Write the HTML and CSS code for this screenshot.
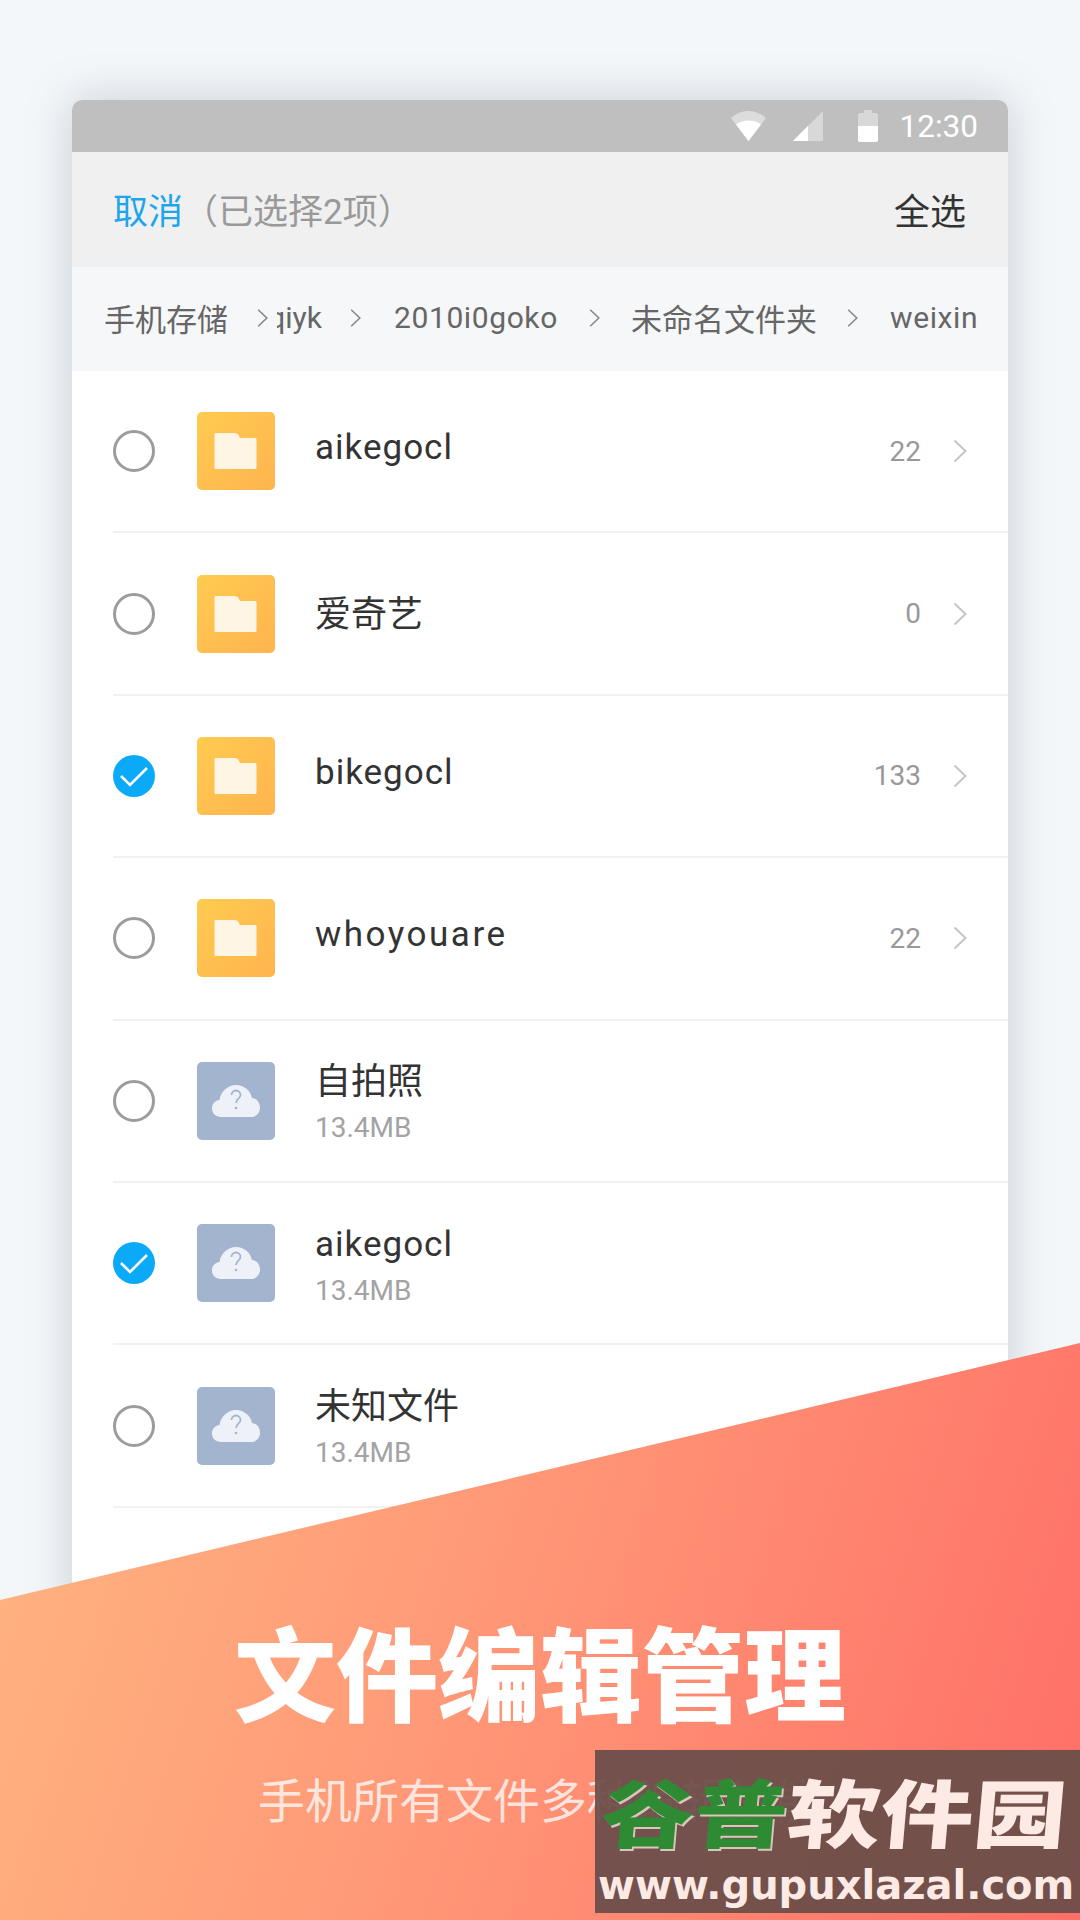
FILE: index.html
```html
<!DOCTYPE html>
<html lang="zh-CN">
<head>
  <meta charset="UTF-8" />
  <meta name="viewport" content="width=device-width, initial-scale=1.0" />
  <title>文件编辑管理</title>
  <link rel="stylesheet" href="styles.css">
</head>
<body>
  <svg class="defs" width="0" height="0">
    <defs>
      <linearGradient id="folder-bg" x1="0" y1="0" x2="1" y2="1">
        <stop offset="0" stop-color="#ffcb50" />
        <stop offset="1" stop-color="#ffb44e" />
      </linearGradient>
      <symbol id="folder" viewBox="0 0 78 78">
        <rect width="78" height="78" rx="5" fill="url(#folder-bg)" />
        <path d="M19 21h18c3 0 4 1 5 3l1 2h15c1 0 1.500 .5 1.500 1.500v28c0 1-.5 1.500-1.500 1.500H19c-1 0-1.500-.5-1.500-1.500V22.500c0-1 .5-1.500 1.500-1.500z" fill="#fff5e4" />
      </symbol>
      <symbol id="cloud" viewBox="0 0 78 78">
        <rect width="78" height="78" rx="5" fill="#a3b4cf" />
        <path d="M24 55c-5.500 0-9-4-9-8.500 0-4.500 3-8 7.500-8.500 1-8 8-15 16.500-15 8 0 14.500 5.500 16 13 5 .5 8 4.500 8 9.500 0 5.500-4 9.500-9 9.500z" fill="#eef1f7" />
        <path d="M34.500 33c0-2.500 2-4.500 4.500-4.500s4.500 2 4.500 4.500c0 3.500-4.500 4-4.500 8" fill="none" stroke="#a3b4cf" stroke-width="1.800" />
        <circle cx="39" cy="46" r="1.300" fill="#a3b4cf" />
      </symbol>
      <symbol id="chevron" viewBox="0 0 14 24">
        <path d="M1.500 1.500 12.500 12 1.500 22.500" fill="none" stroke="currentColor" stroke-width="2" />
      </symbol>
    </defs>
  </svg>

  <div class="phone">
    <div class="status-bar">
      <svg class="wifi" width="35" height="30" viewBox="0 0 35 30">
        <path d="M0 7C5 2.500 11 0 17.500 0S30 2.500 35 7L17.500 30z" fill="#fff" opacity=".45" />
        <path d="M5 13.500C8.500 11 13 9.500 17.500 9.500S26.500 11 30 13.500L17.500 30z" fill="#fff" />
      </svg>
      <svg class="signal" width="30" height="30" viewBox="0 0 30 30">
        <path d="M30 0V30H0z" fill="#fff" opacity=".4" />
        <path d="M15 15V30H0z" fill="#fff" />
      </svg>
      <svg class="battery" width="20" height="32" viewBox="0 0 20 32">
        <path d="M6 0h8v3h4c1 0 2 1 2 2v25c0 1-1 2-2 2H2c-1 0-2-1-2-2V5c0-1 1-2 2-2h4z" fill="#fff" opacity=".4" />
        <path d="M0 16h20v14c0 1-1 2-2 2H2c-1 0-2-1-2-2z" fill="#fff" />
      </svg>
      <span class="time">12:30</span>
    </div>

    <header class="select-bar">
      <div>
        <span class="cancel">取消</span><span class="selected">（已选择2项）</span>
      </div>
      <span class="select-all">全选</span>
    </header>

    <nav class="crumbs">
      <span class="crumb crumb-root">手机存储</span>
      <svg class="crumb-arrow arrow-1"><use href="#chevron" /></svg>
      <span class="crumb crumb-cut"><span>qiyk</span></span>
      <svg class="crumb-arrow arrow-2"><use href="#chevron" /></svg>
      <span class="crumb crumb-num">2010i0goko</span>
      <svg class="crumb-arrow arrow-3"><use href="#chevron" /></svg>
      <span class="crumb crumb-zh">未命名文件夹</span>
      <svg class="crumb-arrow arrow-4"><use href="#chevron" /></svg>
      <span class="crumb crumb-last">weixin</span>
    </nav>

    <main class="file-list">
      <div class="row">
        <span class="radio"></span>
        <svg class="tile"><use href="#folder" /></svg>
        <div class="info info-solo"><div class="name">aikegocl</div></div>
        <span class="count">22</span>
        <svg class="row-arrow"><use href="#chevron" /></svg>
      </div>
      <div class="row">
        <span class="radio"></span>
        <svg class="tile"><use href="#folder" /></svg>
        <div class="info info-low"><div class="name name-zh">爱奇艺</div></div>
        <span class="count">0</span>
        <svg class="row-arrow"><use href="#chevron" /></svg>
      </div>
      <div class="row">
        <svg class="radio-on" viewBox="0 0 42 42"><circle cx="21" cy="21" r="21" fill="#0aaaf8" /><path d="M8 21l9 9L34 13" fill="none" stroke="#fff" stroke-width="2.600" /></svg>
        <svg class="tile"><use href="#folder" /></svg>
        <div class="info info-solo"><div class="name">bikegocl</div></div>
        <span class="count">133</span>
        <svg class="row-arrow"><use href="#chevron" /></svg>
      </div>
      <div class="row">
        <span class="radio"></span>
        <svg class="tile"><use href="#folder" /></svg>
        <div class="info info-solo"><div class="name name-wide">whoyouare</div></div>
        <span class="count">22</span>
        <svg class="row-arrow"><use href="#chevron" /></svg>
      </div>
      <div class="row">
        <span class="radio"></span>
        <svg class="tile"><use href="#cloud" /></svg>
        <div class="info info-low"><div class="name name-zh">自拍照</div><div class="size">13.4MB</div></div>
      </div>
      <div class="row">
        <svg class="radio-on" viewBox="0 0 42 42"><circle cx="21" cy="21" r="21" fill="#0aaaf8" /><path d="M8 21l9 9L34 13" fill="none" stroke="#fff" stroke-width="2.600" /></svg>
        <svg class="tile"><use href="#cloud" /></svg>
        <div class="info info-low"><div class="name">aikegocl</div><div class="size">13.4MB</div></div>
      </div>
      <div class="row">
        <span class="radio"></span>
        <svg class="tile"><use href="#cloud" /></svg>
        <div class="info info-low"><div class="name name-zh">未知文件</div><div class="size">13.4MB</div></div>
      </div>
    </main>
  </div>

  <section class="banner">
    <h1>文件编辑管理</h1>
    <p>手机所有文件多种编辑技能</p>
  </section>

  <aside class="watermark">
    <div class="mark-title"><span class="mark-green">谷普</span><span class="mark-pale">软件园</span></div>
    <div class="mark-url">www.gupuxlazal.com</div>
  </aside>
</body>
</html>
```

FILE: styles.css
```css
html, body {
  margin: 0;
  padding: 0;
}
body {
  position: relative;
  width: 1080px;
  height: 1920px;
  overflow: hidden;
  box-sizing: border-box;
  padding: 100px 72px 0;
  background-color: #f3f7fa;
  font-family: Roboto, "Noto Sans CJK SC", sans-serif;
  color: #333;
}
.defs {
  position: absolute;
}
.phone {
  height: 1820px;
  background: #fff;
  border-radius: 10px 10px 0 0;
  box-shadow: 0 0 44px rgba(120, 130, 145, 0.35);
  overflow: hidden;
}

/* status bar */
.status-bar {
  display: flex;
  align-items: center;
  justify-content: flex-end;
  height: 52px;
  padding-right: 30px;
  background: #bfbfbf;
}
.wifi {
  margin-right: 27px;
}
.signal {
  margin-right: 35px;
}
.battery {
  margin-right: 22px;
}
.time {
  font-size: 31.5px;
  font-weight: 400;
  color: #fff;
}

/* selection header */
.select-bar {
  display: flex;
  align-items: center;
  justify-content: space-between;
  height: 115px;
  padding: 0 42px 2px 41px;
  box-sizing: border-box;
  background: #f0f0f0;
  font-size: 35px;
}
.cancel {
  color: #1ea5ec;
}
.selected {
  color: #999;
}
.select-all {
  font-size: 36px;
  color: #333;
}

/* breadcrumb */
.crumbs {
  display: flex;
  align-items: center;
  box-sizing: border-box;
  height: 104px;
  padding: 0 0 3px 32px;
  background: #f6f7f9;
  font-size: 30px;
  color: #666;
}
.crumb {
  white-space: nowrap;
}
.crumb-root {
  width: 124px;
  font-size: 31px;
}
.crumb-arrow {
  width: 11px;
  height: 20px;
  color: #888;
}
.arrow-1 {
  margin-left: 29px;
}
.crumb-cut {
  display: flex;
  justify-content: flex-end;
  overflow: hidden;
  width: 45px;
  margin-left: 9px;
}
.arrow-2 {
  margin-left: 28px;
}
.crumb-num {
  width: 164px;
  margin-left: 33px;
  letter-spacing: 0.6px;
}
.arrow-3 {
  margin-left: 31px;
}
.crumb-zh {
  width: 186px;
  margin-left: 31px;
  font-size: 31px;
}
.arrow-4 {
  margin-left: 30px;
}
.crumb-last {
  margin-left: 32px;
  letter-spacing: 0.6px;
}

/* file rows */
.row {
  display: flex;
  align-items: center;
  box-sizing: border-box;
  height: 162.4px;
  margin-left: 41px;
  padding-right: 41px;
  border-bottom: 2px solid #f1f1f1;
}
.radio {
  box-sizing: border-box;
  width: 42px;
  height: 42px;
  border: 3px solid #9c9c9c;
  border-radius: 50%;
}
.radio-on {
  width: 42px;
  height: 42px;
}
.tile {
  width: 78px;
  height: 78px;
  margin-left: 42px;
}
.info {
  flex: 1;
  margin-left: 40px;
}
.info-solo {
  margin-top: -6px;
}
.info-low {
  padding-top: 3px;
}
.name {
  font-size: 35px;
  letter-spacing: 1px;
  line-height: 46px;
  color: #333;
}
.name-zh {
  font-size: 36px;
  letter-spacing: 0;
}
.name-wide {
  letter-spacing: 2.5px;
}
.size {
  margin-top: 6px;
  font-size: 28px;
  line-height: 34px;
  color: #a3a3a3;
}
.count {
  margin-right: 32px;
  font-size: 28px;
  color: #999;
}
.row-arrow {
  width: 14px;
  height: 24px;
  color: #c8c4c4;
}

/* bottom banner */
.banner {
  position: absolute;
  left: 0;
  right: 0;
  top: 1343px;
  bottom: 0;
  display: flex;
  flex-direction: column;
  align-items: center;
  padding-top: 267px;
  background: linear-gradient(108deg, #ffb581 0%, #ff9a78 42%, #ff6e66 100%);
  clip-path: polygon(0 257px, 100% 0, 100% 100%, 0 100%);
  color: #fff;
}
.banner h1 {
  margin: 0;
  font-family: "Noto Sans CJK SC", sans-serif;
  font-size: 102px;
  font-weight: 900;
  line-height: 120px;
}
.banner p {
  margin: 38px 0 0;
  font-family: "Noto Sans CJK SC", sans-serif;
  font-size: 47px;
  font-weight: 400;
  line-height: 60px;
  color: rgba(255, 255, 255, 0.75);
}

/* site watermark */
.watermark {
  position: absolute;
  left: 595px;
  top: 1750px;
  width: 485px;
  height: 163px;
  overflow: hidden;
  background: rgba(107, 78, 73, 0.94);
  font-weight: 900;
}
.mark-title {
  display: flex;
  margin: 10px 0 0 7px;
  font-family: "Noto Sans CJK SC", sans-serif;
  font-size: 93px;
  line-height: 100px;
  transform: skewX(-5deg) scaleY(0.8);
}
.mark-green {
  color: #2f8a34;
  text-shadow: 2px 2px 0 #d9c6bb;
}
.mark-pale {
  color: #fdeae5;
}
.mark-url {
  margin: 2px 0 0 3px;
  font-family: "DejaVu Sans", sans-serif;
  font-size: 40px;
  font-weight: 700;
  line-height: 46px;
  white-space: nowrap;
  color: #fdeae5;
}
```
